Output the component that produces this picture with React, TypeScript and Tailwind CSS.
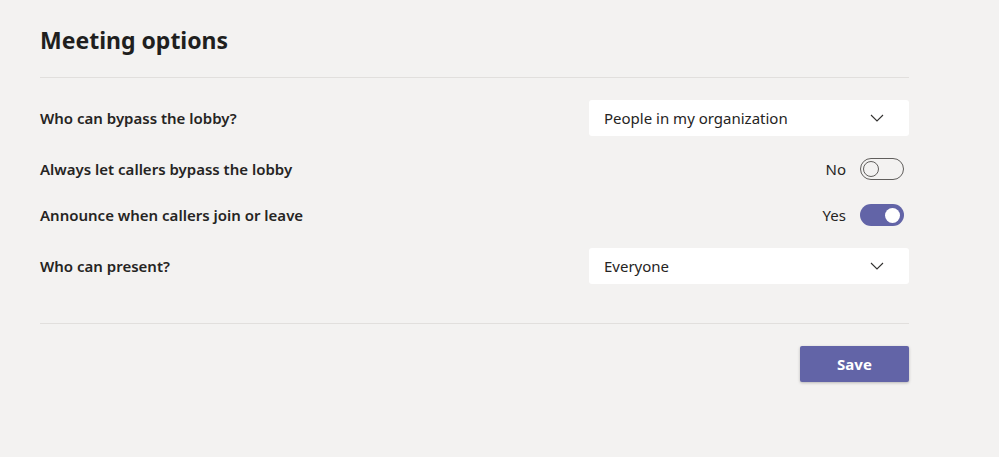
const font = { fontFamily: '"Noto Sans", "Open Sans", sans-serif' }

function Chevron() {
  return (
    <svg width="14" height="8" viewBox="0 0 14 8" fill="none">
      <path d="M1 1l6 6 6-6" stroke="#323130" strokeWidth="1.1" />
    </svg>
  )
}

function Dropdown({ value }: { value: string }) {
  return (
    <div className="w-[320px] h-9 bg-white rounded-[3px] flex items-center justify-between pl-[15px] pr-[25px] text-[15px] text-[#252423]">
      <span>{value}</span>
      <Chevron />
    </div>
  )
}

function Toggle({ on, label }: { on: boolean; label: string }) {
  return (
    <div className="flex items-center gap-[14px] pr-[5px] text-[15px] text-[#252423]">
      <span>{label}</span>
      {on ? (
        <div className="w-11 h-[22px] rounded-full bg-[#6264a7] flex items-center justify-end px-[4px]">
          <div className="w-[15px] h-[15px] rounded-full bg-white" />
        </div>
      ) : (
        <div className="w-11 h-[22px] rounded-full border border-[#605e5c] flex items-center px-[2px]">
          <div className="w-4 h-4 rounded-full border border-[#605e5c]" />
        </div>
      )}
    </div>
  )
}

export default function App() {
  return (
    <div className="w-[999px] h-[457px] bg-[#f3f2f1] px-10 pt-[24px]" style={font}>
      <div className="w-[869px]">
        <h1 className="text-[23px] font-bold text-[#201f1e] leading-[32px]">Meeting options</h1>
        <div className="h-px bg-[#e1dfdd] mt-[21px]" />
        <div className="flex flex-col mt-[22px]">
          <div className="flex items-center justify-between h-9">
            <span className="text-[15px] font-semibold text-[#252423]">Who can bypass the lobby?</span>
            <Dropdown value="People in my organization" />
          </div>
          <div className="flex items-center justify-between h-[22px] mt-[22px]">
            <span className="text-[15px] font-semibold text-[#252423]">Always let callers bypass the lobby</span>
            <Toggle on={false} label="No" />
          </div>
          <div className="flex items-center justify-between h-[22px] mt-[24px]">
            <span className="text-[15px] font-semibold text-[#252423]">Announce when callers join or leave</span>
            <Toggle on={true} label="Yes" />
          </div>
          <div className="flex items-center justify-between h-9 mt-[22px]">
            <span className="text-[15px] font-semibold text-[#252423]">Who can present?</span>
            <Dropdown value="Everyone" />
          </div>
        </div>
        <div className="h-px bg-[#e1dfdd] mt-[39px]" />
        <div className="flex justify-end mt-[22px]">
          <button className="w-[109px] h-9 bg-[#6264a7] rounded-[2px] text-white text-[15px] font-bold shadow-[0_1px_3px_rgba(0,0,0,0.25)]">
            Save
          </button>
        </div>
      </div>
    </div>
  )
}
